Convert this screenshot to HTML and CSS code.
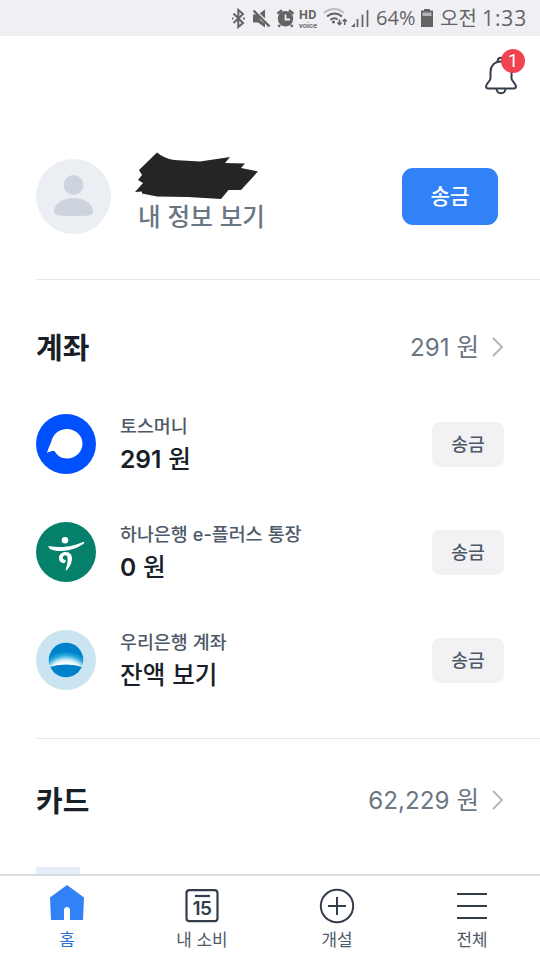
FILE: index.html
```html
<!DOCTYPE html>
<html lang="ko">
<head>
<meta charset="utf-8">
<title>홈</title>
<link rel="stylesheet" href="styles.css">
</head>
<body>
<div class="app">
  <header class="status">
    <svg class="status-icons" width="144" height="36" viewBox="0 0 144 36" fill="none" stroke="#646464" stroke-width="2">
      <path d="M7.500 13.500l9.500 9.500-4.700 4V10l4.700 4-9.500 9M6 18.500h1.500M17 18.500h1.800"/>
      <g fill="#646464" stroke="none"><path d="M27 14.500h5l7-5V18l-4 1-8 3z"/><path d="M27 14.500l12 9v4l-7-5h-5z"/></g>
      <path d="M29 10l15 15" stroke="#f0f0f4" stroke-width="2"/><path d="M27.500 10.500l16 16" stroke-width="2.400"/>
      <circle cx="59.500" cy="18.800" r="7.700" fill="#646464" stroke="none"/><path d="M51.500 13.700l4.500-3.500M67.500 13.700l-4.500-3.500M54 25l-1.500 1.800M65 25l1.500 1.800" stroke-width="2.500"/><path d="M59.500 14.500v5h4.500" stroke="#f0f0f4" stroke-width="1.800"/>
      <path d="M98 13c6-5.500 14-5.500 20 0" stroke="#bdbdc0"/><path d="M101 16.500c4.500-4 10.500-4 15 0M104.500 20c2-2 4.500-2.200 7-.5"/><circle cx="107.500" cy="22" r="1.500" fill="#646464" stroke="none"/>
      <path d="M113.500 19.500v5M111.500 22.500l2 2.200 2-2.200M118.700 25v-5.500M116.700 21.500l2-2.200 2 2.200" stroke-width="1.500"/>
      <path d="M125 27l4-4v4z" fill="#646464" stroke="none"/><path d="M131.500 27v-8M136.500 27V14.500M141.500 27V10" stroke-width="1.700"/>
    </svg>
    <span class="hd"><b>HD</b><i>voice</i></span>
    <span class="pct">64%</span>
    <svg class="battery" width="14" height="20" viewBox="0 0 14 20"><path d="M4 1h6v1.500h3V19H1V2.500h3z" fill="#646464"/><path d="M2.500 4.500h9V8h-9z" fill="#b5b5b7"/></svg>
    <span class="ampm">오전</span><span class="clock">1:33</span>
  </header>

  <main class="content">
    <div class="topbar">
      <div class="bell">
        <svg width="34" height="40" viewBox="0 0 34 40" fill="none" stroke="#333d4b" stroke-width="2"><path d="M13.500 6.500c0-5 7-5 7 0M17 6.500C10 6.500 6.500 11.500 6.500 17v6.500c0 2.500-4.500 5-4.500 8 0 1.300 1 2 2.500 2h25c1.500 0 2.500-.7 2.500-2 0-3-4.500-5.500-4.500-8V17C27.500 11.500 24 6.500 17 6.500zM12.500 34c.5 5.500 8.500 5.500 9 0"/></svg>
        <span class="badge">1</span>
      </div>
    </div>

    <section class="profile">
      <svg class="avatar" width="75" height="75" viewBox="0 0 75 75"><circle cx="37.500" cy="37.500" r="37.500" fill="#ebeff3"/><circle cx="37.500" cy="26" r="10" fill="#cdd4dd"/><path d="M18 52c0-7 9-13 19.500-13S57 45 57 52c0 3-2 4-5 4.500q-14.500 1-29 0c-3-.5-5-1.500-5-4.500z" fill="#cdd4dd"/></svg>
      <div class="who">
        <svg class="scribble" width="126" height="50" viewBox="0 0 126 50"><path d="M22 1q7 6 17 7.500l26 1.500L95 5.500l-5 6 20 .5-4 4.500 17 3.500L106 38.500H93.500l-7.500 9L53 45.500 22 45l-15-3 0-2-7 .5 8-9-5-3 4-5-3-5z" transform="translate(0 .5)" fill="#252525"/></svg>
        <span class="info">내 정보 보기</span>
      </div>
      <span class="send-main">송금</span>
    </section>

    <section class="group">
      <div class="head"><h2>계좌</h2><span class="total"><span class="num">291</span> 원</span><svg class="chev" width="14" height="22" viewBox="0 0 14 22" fill="none" stroke="#b0b8c1" stroke-width="2"><path d="M3 2l9 9-9 9"/></svg></div>
      <div class="row">
        <svg class="logo" width="60" height="60" viewBox="0 0 60 60"><circle cx="30" cy="30" r="30" fill="#0050ff"/><path d="M11 39c1-4 2.500-7 4-10.500C17 20 23 15 31 15c8.500 0 15.500 6.500 15.500 14.500S40 44.500 31 44.500c-6 0-10-3-12.500-7.500C16 37 13 37.500 11 39z" fill="#fff"/></svg>
        <div class="text"><span class="name">토스머니</span><span class="amount"><span class="num">291</span> 원</span></div><span class="send">송금</span>
      </div>
      <div class="row">
        <svg class="logo" width="60" height="60" viewBox="0 0 60 60"><circle cx="30" cy="30" r="30" fill="#04806b"/><circle cx="29" cy="18.300" r="3.300" fill="#fff"/><path d="M12 24.300c3 0 6 .7 12 .7 10 0 16-2.200 23-5 1.700-.4 1.600 1.200.5 1.800C41.500 26 33.500 29 24.500 29 17 29 13.300 27.500 12 24.300z" fill="#fff"/><path d="M28 41c-2.800 0-5-1.800-5-5 0-3.500 3-6 6.700-6 4.300 0 6.500 3 6.300 7-.3 5-2.700 8.500-5.700 11.500l-.8-.5c1.500-4 2.300-8 2.100-12-.1-1.700-.8-2.700-2.300-2.700-1.500 0-2.500 1-2.500 2.400 0 1.400 1.200 2 2.700 2.300.5 1.300-.1 3-1.500 3z" fill="#fff"/></svg>
        <div class="text"><span class="name">하나은행 <span class="latin">e-</span>플러스 통장</span><span class="amount"><span class="num">0</span> 원</span></div><span class="send">송금</span>
      </div>
      <div class="row">
        <svg class="logo" width="60" height="60" viewBox="0 0 60 60"><defs><radialGradient id="glow" gradientUnits="userSpaceOnUse" cx="30" cy="50" r="33"><stop offset=".5" stop-color="#fff"/><stop offset=".6" stop-color="#d9f2fb"/><stop offset=".75" stop-color="#28a7de"/><stop offset=".87" stop-color="#0082ca"/></radialGradient><clipPath id="globe"><circle cx="30" cy="30" r="17.300"/></clipPath></defs><circle cx="30" cy="30" r="30" fill="#cbe4f2"/><g clip-path="url(#globe)"><path d="M12 12h36v36H12z" fill="url(#glow)"/><path d="M12 37.500q18-6 36 0V48H12z" fill="#0082ca"/></g></svg>
        <div class="text"><span class="name">우리은행 계좌</span><span class="amount">잔액 보기</span></div><span class="send">송금</span>
      </div>
    </section>

    <section class="group cards">
      <div class="head"><h2>카드</h2><span class="total"><span class="num">62,229</span> 원</span><svg class="chev" width="14" height="22" viewBox="0 0 14 22" fill="none" stroke="#b0b8c1" stroke-width="2"><path d="M3 2l9 9-9 9"/></svg></div>
      <div class="card-peek"></div>
    </section>
  </main>

  <nav class="tabs">
    <div class="tab active"><svg width="36" height="36" viewBox="0 0 36 36"><path d="M18 0L1 12.500 2 35h13V25c0-4 6-4 6 0v10h13l1-22.500z" fill="#3182f6"/></svg><span>홈</span></div>
    <div class="tab"><div class="cal"><svg width="36" height="36" viewBox="0 0 36 36" fill="none" stroke="#333d4b" stroke-width="2.200"><rect x="2.500" y="5.200" width="31" height="31" rx="3"/><path d="M11 11h15"/></svg><b>15</b></div><span>내 소비</span></div>
    <div class="tab"><svg width="36" height="36" viewBox="0 0 36 36" fill="none" stroke="#333d4b" stroke-width="2"><circle cx="18" cy="21" r="16.200"/><path d="M9 21h18M18 12v18"/></svg><span>개설</span></div>
    <div class="tab"><svg width="36" height="36" viewBox="0 0 36 36" fill="none" stroke="#333d4b" stroke-width="2"><path d="M3 9h30M3 21h30M3 33h30"/></svg><span>전체</span></div>
  </nav>
</div>
</body>
</html>
```
FILE: styles.css
```css
* { box-sizing: border-box; }
body { margin: 0; background: #fff; font-family: "Noto Sans CJK KR", sans-serif; color: #191f28; }
.app { width: 540px; height: 960px; display: flex; flex-direction: column; overflow: hidden; }
.num, .latin { font-family: Inter, sans-serif; line-height: 0; }
svg { display: block; flex: none; overflow: visible; }

.status { height: 36px; flex: none; position: relative; background: #f0f0f4; color: #646464; display: flex; align-items: center; padding-left: 226px; white-space: nowrap; }
.status-icons { width: 144px; }
.hd { position: absolute; left: 298px; top: 9px; width: 20px; font-family: Roboto, sans-serif; text-align: center; }
.hd b { display: block; font-size: 12.5px; line-height: 12px; font-weight: 700; letter-spacing: .6px; }
.hd i { display: block; font: 600 7.5px/9px Roboto, sans-serif; }
.pct { width: 40px; margin-left: 6px; font: 500 20px/36px "Open Sans", sans-serif; letter-spacing: .1px; }
.battery { margin: 0 6px 0 4px; }
.ampm { width: 42px; font-size: 20px; line-height: 36px; font-weight: 400; }
.clock { font: 500 21px/36px "Open Sans", sans-serif; letter-spacing: .9px; }

.content { flex: 1; min-height: 0; overflow: hidden; }
.topbar { height: 108px; padding: 19px 22px 0; display: flex; justify-content: flex-end; }
.bell { position: relative; width: 34px; height: 40px; }
.badge { position: absolute; left: 17px; top: -6px; width: 24px; height: 24px; border-radius: 50%; background: #f04452; color: #fff; text-align: center; font: 400 18px/24px Roboto, sans-serif; }

.profile { height: 136px; margin-left: 36px; padding: 15px 42px 0 0; border-bottom: 1px solid #e5e8eb; display: flex; align-items: flex-start; }
.who { margin: -8px 0 0 24px; flex: 1; }
.info { display: block; margin-left: 3px; font-size: 24.6px; line-height: 32px; font-weight: 500; color: #6b7684; white-space: nowrap; margin-top: -2px; }
.send-main { width: 96px; height: 57px; margin-top: 9px; border-radius: 11px; background: #3182f6; color: #fff; text-align: center; font-size: 21.3px; line-height: 54px; font-weight: 500; }

.group { margin-left: 36px; padding: 42px 36px 0 0; height: 459px; border-bottom: 1px solid #e5e8eb; }
.head { height: 48px; display: flex; align-items: center; margin-bottom: 44px; }
h2 { margin: 0; flex: 1; font-size: 29px; line-height: 46px; font-weight: 700; }
.total { font-size: 24.5px; line-height: 48px; color: #6b7684; }
.total .num { font-size: 24.2px; }
.chev { margin-left: 11px; position: relative; top: 1px; }
.row { height: 60px; margin-bottom: 48px; display: flex; align-items: center; }
.text { flex: 1; margin-left: 24px; display: flex; flex-direction: column; white-space: nowrap; }
.name { font-size: 18.4px; line-height: 27px; font-weight: 500; color: #4e5968; margin: -1px 0 1px; }
.latin { font-size: 18px; }
.amount { font-size: 24.6px; line-height: 35px; font-weight: 500; }
.amount .num { font-weight: 600; }
.send { width: 72px; height: 45px; border-radius: 8px; background: #f2f2f5; color: #4e5968; text-align: center; font-size: 18.3px; line-height: 43px; font-weight: 500; }
.cards { padding-top: 36px; border: 0; }
.card-peek { width: 44px; height: 40px; background: #e8edfc; }

.tabs { height: 86px; flex: none; border-top: 2px solid #d8dbdf; background: #fff; display: flex; }
.tab { flex: 1; display: flex; flex-direction: column; align-items: center; padding: 9px 1px 0 0; font-size: 16.9px; line-height: 26px; color: #4e5968; }
.tab span { margin-top: 5px; }
.active { color: #2b6fd0; }
.cal { position: relative; }
.cal b { position: absolute; left: 0; top: 14px; width: 36px; text-align: center; font: 600 19px/20px Inter, sans-serif; letter-spacing: -.5px; color: #333d4b; }
```
